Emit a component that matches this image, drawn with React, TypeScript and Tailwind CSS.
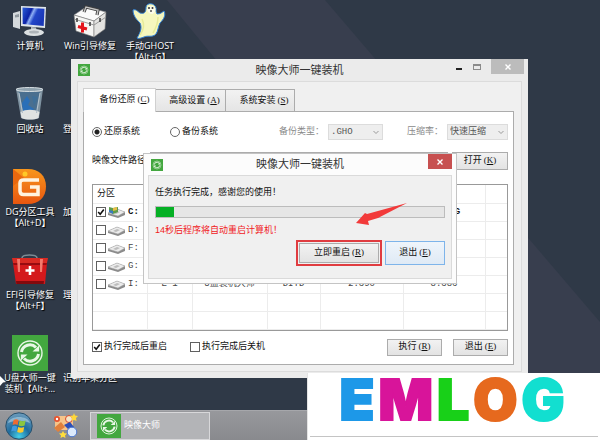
import type { ReactNode } from "react";

const SyncIcon = ({ className }: { className?: string }) => (
  <svg viewBox="0 0 36 36" className={className} aria-hidden="true">
    <rect width="36" height="36" fill="#43a73f"/>
    <circle cx="18" cy="18" r="12" fill="none" stroke="#e9f7e6" strokeWidth="1.4"/>
    <path d="M9.500 17a8.500 8.500 0 0 1 14.500-4.500" fill="none" stroke="#e9f7e6" strokeWidth="3"/>
    <path d="M26.500 19a8.500 8.500 0 0 1-14.500 4.500" fill="none" stroke="#e9f7e6" strokeWidth="3"/>
    <path d="M20.500 16.500h6.600v-6z" fill="#e9f7e6"/>
    <path d="M15.500 19.500H8.900v6z" fill="#e9f7e6"/>
  </svg>
);

const ComputerIcon = () => (
  <svg viewBox="0 0 36 36" className="size-9">
    <defs>
      <linearGradient id="screen" x1="0" y1="0" x2="1" y2=".4">
        <stop offset="0" stopColor="#2b5fd8"/>
        <stop offset=".4" stopColor="#0c22a8"/>
        <stop offset=".5" stopColor="#8fb0f5"/>
        <stop offset=".65" stopColor="#2346c8"/>
        <stop offset="1" stopColor="#1a38b8"/>
      </linearGradient>
    </defs>
    <path d="M1 10l7-2v18l-7-2z" fill="#d4d9dc"/>
    <path d="M3 12l4-1v3l-4 .6z" fill="#8f989f"/>
    <path d="M9 3l25 1-1 21-24-2z" fill="#dfe5ea"/>
    <path d="M10.500 4.500l22 1.200-.8 17.300-21-2z" fill="url(#screen)"/>
    <path d="M19 24l5 .5 1 4h-6z" fill="#b9bfc4"/>
    <ellipse cx="22" cy="29.500" rx="10" ry="3.500" fill="#dce0e2"/>
    <ellipse cx="22" cy="29" rx="5" ry="1.500" fill="#aeb4b9"/>
  </svg>
);

const FirstAidIcon = () => (
  <svg viewBox="0 0 36 36" className="size-9">
    <path d="M2 12l12-8 20 5-12 9z" fill="#fafafa" stroke="#888" strokeWidth=".6"/>
    <path d="M12 9l2-5 12 3-1 5" fill="none" stroke="#3f3f3f" strokeWidth="3.200"/>
    <path d="M12 9l2-5 12 3-1 5" fill="none" stroke="#c4c4c4" strokeWidth="1.400"/>
    <path d="M2 12l20 6v16L4 28z" fill="#f6f6f4" stroke="#777" strokeWidth=".6"/>
    <path d="M22 18l12-9-1 17-11 8z" fill="#e4e4e2" stroke="#777" strokeWidth=".6"/>
    <path d="M2 16l20 6 12-8" fill="none" stroke="#999"/>
    <path d="M5 15v4M18 19v4M28 15v4" stroke="#444" strokeWidth="1.600"/>
    <path d="M10.500 19.500v10M6 23.500l9 2.500" stroke="#e4141b" strokeWidth="3"/>
  </svg>
);

const GhostIcon = () => (
  <svg viewBox="0 0 36 36" className="size-9">
    <path
      d="M14 4c1-5 9-4 10 1 0 3 0 4 1 6 4 0 5-2 7-3 2 4 0 8-4 12-2 4-2 8-4 11-4 4-8 1-12 3-3 1-5 2-7 1 4-6 5-11 3-15C5 17 1 13 1 7c3-1 4 1 7 3 4 1 6 0 6-6z"
      fill="#f5f7be" stroke="#2f7fd6"
    />
    <path d="M10 16c3 6 1 12-2 16M26 14c0 6-2 11-5 16" fill="none" stroke="#e6eb98" strokeWidth="1.500"/>
    <path d="M15 6c1-4 8-4 8.500 0 0 2-1 4-3 5-3 0-5-2-5.500-5z" fill="#fbfbea"/>
    <circle cx="17" cy="5" r="1" fill="#333"/>
    <circle cx="20.500" cy="5" r="1" fill="#333"/>
    <circle cx="19" cy="8" r="1" fill="#555"/>
  </svg>
);

const BinIcon = () => (
  <svg viewBox="0 0 36 36" className="size-9">
    <path d="M4 3h27l-4 29c-4 2-14 2-18 0z" fill="#7f93a1"/>
    <path d="M7 6h21l-3.500 22h-13z" fill="#4a6f8f"/>
    <path d="M10 17l5-7 3 5-2 4 6 4-4 4-7-2z" fill="#2a6fb8"/>
    <path d="M20 10l6 1-4 9z" fill="#3f6f98"/>
    <path d="M8.500 26c5-3 14-3 19 0l-1 6c-5 2-12 2-17 0z" fill="#dfe3e2"/>
    <ellipse cx="17.500" cy="3.500" rx="13.500" ry="2" fill="#8fa2ae" stroke="#d6dee2"/>
    <path d="M7 7l3.500 20M28 7l-3.500 20" stroke="#b2c0ca" strokeWidth="1.200"/>
  </svg>
);

const DiskGeniusIcon = () => (
  <svg viewBox="0 0 36 36" className="size-9">
    <defs>
      <linearGradient id="dg" x1="0" y1="0" x2="0" y2="1">
        <stop offset="0" stopColor="#f8961c"/>
        <stop offset="1" stopColor="#e8560f"/>
      </linearGradient>
    </defs>
    <path d="M1 0h15c11 0 18 7 18 17.500S27 35 16 35H1z" fill="url(#dg)"/>
    <path d="M1 0l11 9-11 8z" fill="#e8680f"/>
    <circle cx="13" cy="5" r="2.500" fill="#ffc927"/>
    <path d="M27 11H11.500Q8 11 8 14v8q0 3.500 3.500 3.500H26V18h-8" fill="none" stroke="#fff3df" strokeWidth="3.500"/>
  </svg>
);

const ToolboxIcon = () => (
  <svg viewBox="0 0 36 36" className="size-9">
    <path d="M10 6c0-4 15-4 15 0" fill="none" stroke="#7d8b94" strokeWidth="1.600"/>
    <path d="M0 6h36l-1 5H1z" fill="#d92a23"/>
    <path d="M1 11h34l-2 21H4z" fill="#d4191c"/>
    <path d="M1 11h34l-.5 2h-33z" fill="#980b10"/>
    <path d="M5 7h3v13H6zM28 7h3l-1 13h-2z" fill="#f47a6c"/>
    <path d="M18 14v9M13.500 18.500h9" stroke="#fff" strokeWidth="2.600"/>
    <path d="M4 29h28l-.4 3H4.400z" fill="#83090d"/>
  </svg>
);

const StartOrb = () => (
  <svg viewBox="0 0 28 28" className="size-7">
    <defs>
      <radialGradient id="orb" cx=".5" cy=".9" r=".9">
        <stop offset="0" stopColor="#45d0e8"/>
        <stop offset=".45" stopColor="#1f6d9f"/>
        <stop offset="1" stopColor="#6f9dbd"/>
      </radialGradient>
    </defs>
    <circle cx="14" cy="14" r="13.200" fill="url(#orb)" stroke="#28506c"/>
    <path d="M3 11C5 3 23 3 25 11 18 8 10 8 3 11z" fill="#b8d3e2" opacity=".6"/>
    <path d="M8.600 8c2-1 3-1 5 0l-1 5c-2-1-3-1-5 0z" fill="#ee6a30"/>
    <path d="M14.600 8.500c2 1 4 1 6 0l-1 5c-2 1-4 1-6 0z" fill="#8cc63f"/>
    <path d="M7.200 14.500c2-1 3-1 5 0l-1 5c-2-1-3-1-5 0z" fill="#3f9ae0"/>
    <path d="M13.200 15c2 1 4 1 6 0l-1 5c-2 1-4 1-6 0z" fill="#fdc92b"/>
  </svg>
);

const ToolsIcon = () => (
  <svg viewBox="0 0 26 26" className="size-6.5">
    <rect x="3" y="3" width="18" height="14" rx="2" fill="#f6c48a"/>
    <circle cx="5" cy="6" r="3" fill="#e6512e"/>
    <circle cx="5" cy="6" r="1.200" fill="#fff"/>
    <circle cx="17" cy="6" r="3.500" fill="#f4e6c8" stroke="#d9482b"/>
    <path d="M2 15l7-6 4 5-7 5z" fill="#e0803c"/>
    <path d="M22 0l1 2.500L26 3l-2 2 .5 3-2.500-1-2 1V5l-2-2 3-.5z" fill="#ffd83a"/>
    <path d="M12 12l6-3 4 5-4 4z" fill="#2b4fb8"/>
    <circle cx="20" cy="19" r="4.800" fill="#dbe9fb" stroke="#4a76cf"/>
    <path d="M11 18l1.300 2.200 2.700.3-2 1.900.5 2.600-2.500-1.300L8.500 25l.5-2.600-2-1.900 2.700-.3z" fill="#ffdf3c"/>
  </svg>
);

const DriveIcon = ({ system }: { system?: boolean }) => (
  <svg viewBox="0 0 18 12" className="h-3 w-4.5">
    <path d="M0 7l9-4 8 3v3l-7 3-10-3z" fill="#8b8b8b"/>
    <path d="M0 7l9-4 8 3-7 4z" fill="#ececec" stroke="#a0a0a0" strokeWidth=".5"/>
    <path d="M5 7l4-2 3 1-4 2z" fill="#bdbdbd"/>
    {system && <path d="M1 1l4 1 5-1v5l-5 2-4-2z" fill="#5d9b4c"/>}
    {system && <path d="M1 4l4 1v3L1 6z" fill="#3b78c4"/>}
    {system && <path d="M5 2l4-1v3L5 5z" fill="#e6bd48"/>}
  </svg>
);

const shortcuts: { icon?: ReactNode; label: string; sub?: string }[] = [
  { icon: <ComputerIcon/>, label: "计算机" },
  { icon: <BinIcon/>, label: "回收站" },
  { icon: <DiskGeniusIcon/>, label: "DG分区工具", sub: "【Alt+D】" },
  { icon: <ToolboxIcon/>, label: "EFI引导修复", sub: "【Alt+F】" },
  { icon: <SyncIcon className="size-9"/>, label: "U盘大师一键", sub: "装机【Alt+..." },
  { icon: <FirstAidIcon/>, label: "Win引导修复" },
  { label: "登录密码修改" },
  { label: "加载网络组件" },
  { label: "理顺盘符顺序" },
  { label: "识别苹果分区" },
  { icon: <GhostIcon/>, label: "手动GHOST", sub: "【Alt+G】" },
];

const drives = [
  { name: "C:", checked: true, cells: ["", "", "", "", "8.000G"] },
  { name: "D:", cells: ["", "", "", "", ""] },
  { name: "F:", cells: ["", "", "", "", ""] },
  { name: "G:", cells: ["", "", "", "", ""] },
  { name: "I:", cells: ["E-1", "U盘装机大师", "DITD", "2.390", "8.386"] },
];

const Key = ({ k }: { k: string }) => (
  <span className="ml-0.5 font-['Liberation_Serif',serif]">(<u>{k}</u>)</span>
);

const CheckBox = ({ id, name, checked }: { id?: string; name?: string; checked?: boolean }) => (
  <span className="grid size-2.5 shrink-0">
    <input
      id={id}
      type="checkbox"
      aria-label={name}
      defaultChecked={checked}
      className="peer col-start-1 row-start-1 size-2.5 appearance-none border border-[#606060] bg-white"
    />
    <svg viewBox="0 0 10 10" className="pointer-events-none invisible col-start-1 row-start-1 size-2.5 peer-checked:visible">
      <path d="M2.200 5l2 2.200L7.800 2.600" fill="none" stroke="#111" strokeWidth="1.600"/>
    </svg>
  </span>
);

const Radio = ({ label, checked }: { label: string; checked?: boolean }) => (
  <label className="flex items-center gap-0.5">
    <input
      type="radio"
      name="mode"
      defaultChecked={checked}
      className="size-2.5 appearance-none rounded-full border border-[#666] bg-white checked:bg-[radial-gradient(circle,#222_0_2px,#fff_3px)]"
    />
    {label}
  </label>
);

const PushButton = ({ children, className = "" }: { children: ReactNode; className?: string }) => (
  <button
    className={`flex items-center justify-center border border-[#acacac] bg-linear-to-b from-[#f2f2f2] to-[#e3e3e3] ${className}`}
  >
    {children}
  </button>
);

const Select = ({ id, label, value, className }: { id: string; label: string; value: string; className: string }) => (
  <div className="flex items-center gap-1 text-[#8a8a8a]">
    <label htmlFor={id}>{label}</label>
    <span className={`grid ${className}`}>
      <select
        id={id}
        className="col-start-1 row-start-1 h-4 w-full appearance-none border border-[#dcdcdc] bg-[#eeeeee] pl-0.5 font-['Liberation_Mono','Noto_Sans_CJK_SC',monospace] leading-3 text-[#555]"
      >
        <option>{value}</option>
      </select>
      <svg viewBox="0 0 6 6" className="pointer-events-none col-start-1 row-start-1 mr-1 size-1.5 self-center justify-self-end">
        <path d="M.5 2L3 4.500 5.500 2" fill="none" stroke="#999"/>
      </svg>
    </span>
  </div>
);

const MainWindow = () => (
  <section className="absolute top-[59px] right-[72px] left-[71px] bg-[#ebebeb] px-1.5 pb-1.5">
    <header className="relative flex h-[22px] items-center justify-center">
      <SyncIcon className="absolute left-px size-3"/>
      <h1 className="text-[11px] text-[#333]">映像大师一键装机</h1>
      <div className="absolute top-0 -right-0.5 flex h-[15px] items-center">
        <button aria-label="最小化" className="grid h-full w-5 place-items-center">
          <span className="mt-1 h-0.5 w-1.5 bg-[#222]"></span>
        </button>
        <button aria-label="最大化" className="mr-1.5 grid h-full w-4 place-items-center">
          <span className="h-1.5 w-2 border border-t-2 border-[#8b8b8b]"></span>
        </button>
        <button aria-label="关闭" className="grid h-full w-[33px] place-items-center bg-[#bcbcbc]">
          <svg viewBox="0 0 8 8" className="size-2">
            <path d="M1.500 1.500l5 5M6.500 1.500l-5 5" stroke="#fff" strokeWidth="1.400"/>
          </svg>
        </button>
      </div>
    </header>

    <div className="border border-[#dcdcdc] bg-[#f0f0f0] pt-1.5 pr-[7px] pb-1.5 pl-[5px]">
      <div className="flex items-end" role="tablist">
        <button role="tab" aria-selected="true" className="relative z-10 -mb-px h-6 w-[73px] border border-b-0 border-[#d0d0d0] bg-white pb-0.5 pl-2.5">
          备份还原<Key k="C"/>
        </button>
        <button role="tab" className="h-[22px] w-[70px] border border-b-0 border-l-0 border-[#acacac] bg-linear-to-b from-[#f2f2f2] to-[#e5e5e5] pl-2">
          高级设置<Key k="A"/>
        </button>
        <button role="tab" className="h-[22px] w-[69px] border border-b-0 border-l-0 border-[#acacac] bg-linear-to-b from-[#f2f2f2] to-[#e5e5e5] pl-2">
          系统安装<Key k="S"/>
        </button>
      </div>

      <div className="border border-[#acacac] bg-white px-[5px] pt-3 pb-2">
        <div className="flex items-center pl-[3px]">
          <Radio label="还原系统" checked/>
          <div className="w-[30px]"></div>
          <Radio label="备份系统"/>
          <div className="ml-auto flex gap-6">
            <Select id="backup-type" label="备份类型：" value=".GHO" className="w-[55px]"/>
            <Select id="ratio" label="压缩率：" value="快速压缩" className="w-[61px]"/>
          </div>
        </div>

        <div className="mt-3 flex items-center gap-1">
          <label htmlFor="image-path" className="ml-[3px]">映像文件路径</label>
          <input id="image-path" className="h-[18px] min-w-0 flex-1 border border-[#acacac]"/>
          <PushButton className="h-[18px] w-14">打开<Key k="K"/></PushButton>
        </div>

        <div className="mt-3.5 ml-[3px] border border-[#999]">
          <table className="w-full table-fixed border-collapse">
            <thead>
              <tr className="h-[18px] text-left">
                <th className="w-[54px] border-r border-b border-[#ececec] pl-1 font-normal">分区</th>
                <th className="w-[45px] border border-t-0 border-[#ececec]"></th>
                <th className="w-[75px] border border-t-0 border-[#ececec]"></th>
                <th className="w-[53px] border border-t-0 border-[#ececec]"></th>
                <th className="w-[83px] border border-t-0 border-[#ececec]"></th>
                <th className="w-[82px] border border-t-0 border-[#ececec]"></th>
                <th className="border-b border-[#ececec]"></th>
              </tr>
            </thead>
            <tbody>
              {drives.map((drive) => (
                <tr
                  key={drive.name}
                  className={`h-[18px] text-center font-['Liberation_Mono','Noto_Sans_CJK_SC',monospace] ${drive.checked ? "font-bold" : "text-[#444]"}`}
                >
                  <td className="border-r border-b border-[#ececec] pl-[3px]">
                    <div className="flex items-center gap-0.5">
                      <CheckBox name={drive.name} checked={drive.checked}/>
                      <DriveIcon system={drive.checked}/>
                      <span className="leading-3">{drive.name}</span>
                    </div>
                  </td>
                  {drive.cells.map((cell, i) => (
                    <td key={i} className="border border-[#ececec] leading-3 whitespace-nowrap">{cell}</td>
                  ))}
                  <td className="border-b border-[#ececec]"></td>
                </tr>
              ))}
              {[0, 1].map((i) => (
                <tr key={i} className="h-[18px]">
                  {[0, 1, 2, 3, 4, 5, 6].map((c) => (
                    <td key={c} className="border-x border-b border-[#ececec] first:border-l-0 last:border-r-0"></td>
                  ))}
                </tr>
              ))}
            </tbody>
          </table>
        </div>

        <div className="mt-2 ml-[3px] flex items-center gap-[23px]">
          <div className="flex items-center gap-0.5">
            <CheckBox id="reboot" checked/>
            <label htmlFor="reboot">执行完成后重启</label>
          </div>
          <div className="flex items-center gap-0.5">
            <CheckBox id="shutdown"/>
            <label htmlFor="shutdown">执行完成后关机</label>
          </div>
          <div className="ml-auto flex gap-[11px]">
            <PushButton className="h-[17px] w-[55px]">执行<Key k="R"/></PushButton>
            <PushButton className="h-[17px] w-[55px]">退出<Key k="E"/></PushButton>
          </div>
        </div>
      </div>
    </div>
  </section>
);

const RestartDialog = () => (
  <section
    role="dialog"
    aria-label="映像大师一键装机"
    className="absolute top-[153px] right-[143px] left-[143px] border border-[#c4c4c4] bg-[#fcfcfc] px-1 pb-1"
  >
    <header className="relative flex h-[21px] items-center justify-center">
      <SyncIcon className="absolute left-[3px] size-3"/>
      <h2 className="text-[11px] text-[#333]">映像大师一键装机</h2>
      <button aria-label="关闭" className="absolute top-0 right-0 grid h-[15px] w-6 place-items-center bg-[#c75050]">
        <svg viewBox="0 0 8 8" className="size-2">
          <path d="M1.500 1.500l5 5M6.500 1.500l-5 5" stroke="#fff" strokeWidth="1.400"/>
        </svg>
      </button>
    </header>
    <div className="border border-[#dadada] bg-[#f0f0f0] px-1.5 pt-2.5 pb-3">
      <p className="leading-3">任务执行完成，感谢您的使用！</p>
      <div role="progressbar" aria-valuenow={6} className="mt-2 h-3 border border-[#bcbcbc] bg-[#e6e6e6]">
        <div className="h-full w-[18px] bg-[#06b025]"></div>
      </div>
      <p className="mt-1.5 leading-3 text-[#f0201c]">14秒后程序将自动重启计算机！</p>
      <div className="mt-1 flex items-center justify-end gap-[3px]">
        <div className="border-2 border-[#e03c40] p-px">
          <PushButton className="h-5 w-20">立即重启<Key k="R"/></PushButton>
        </div>
        <PushButton className="h-6 w-[60px] !border-[#7eb4ea] !from-[#eff5fb] !to-[#dfeaf5]">退出<Key k="E"/></PushButton>
      </div>
    </div>
    <svg viewBox="0 0 52 23" className="absolute top-[49px] right-[48px] h-[23px] w-[52px]" aria-hidden="true">
      <path d="M51 0L11 11 9 10 0 20l13 2-1-4 10-3z" fill="#f23a3a"/>
    </svg>
  </section>
);

const Banner = () => (
  <aside className="absolute right-0 bottom-0 left-[307px] z-20 border-l border-[#e4e4e4] bg-white px-0.5 pb-[3px]">
    <div className="flex h-16 items-center justify-center gap-1 border-b border-[#c4c4c4] pr-1 pb-2.5 font-['Inter',sans-serif] text-[57px] leading-none font-black [paint-order:stroke] [-webkit-text-stroke:2px_currentColor]">
      <span className="text-[#1d98e8]">E</span>
      <span className="text-[#d8149a]">M</span>
      <span className="text-[#18d018]">L</span>
      <span className="text-[#e6691e]">O</span>
      <span className="text-[#12dfd0]">G</span>
    </div>
  </aside>
);

export default function App() {
  return (
    <div className="relative flex h-screen flex-col overflow-hidden bg-[#2f3947] font-['Liberation_Sans','Noto_Sans_CJK_SC',sans-serif] text-[9px] text-[#111]">
      <svg viewBox="0 0 600 440" preserveAspectRatio="none" className="absolute inset-0 size-full" aria-hidden="true">
        <path d="M167 0H325L600 322V440H528z" fill="#383e4e"/>
      </svg>

      <main className="min-h-0 flex-1">
        <ul className="relative grid auto-cols-[60px] grid-flow-col grid-rows-[repeat(5,83px)] font-['Open_Sans','Noto_Sans_CJK_SC',sans-serif] text-white">
          {shortcuts.map((item) => (
            <li key={item.label} className="flex flex-col items-center pt-[3px] text-center leading-[11px] whitespace-nowrap text-shadow-[1px_1px_1px_#000]">
              <div className="mb-px size-9">{item.icon}</div>
              <span>{item.label}</span>
              {item.sub && <span>{item.sub}</span>}
            </li>
          ))}
        </ul>
        <svg viewBox="0 0 7 12" className="absolute top-[375px] left-0 h-3 w-[7px]" aria-hidden="true">
          <path d="M0 1l6 6-3 .4L0 11z" fill="#fff"/>
        </svg>
        <MainWindow/>
        <RestartDialog/>
      </main>

      <footer className="relative z-10 flex h-[30px] items-center border-t border-[#a6a7ab] bg-linear-to-b from-[#97989c] to-[#898a8e] pl-[5px]">
        <button aria-label="开始"><StartOrb/></button>
        <button aria-label="工具" className="ml-[19px]"><ToolsIcon/></button>
        <button className="ml-3 flex h-7 w-[120px] items-center gap-[3px] border border-[#d8d8da] bg-[#b3b4b7] pl-1.5 text-white">
          <SyncIcon className="size-6"/>
          映像大师
        </button>
      </footer>
      <Banner/>
    </div>
  );
}
